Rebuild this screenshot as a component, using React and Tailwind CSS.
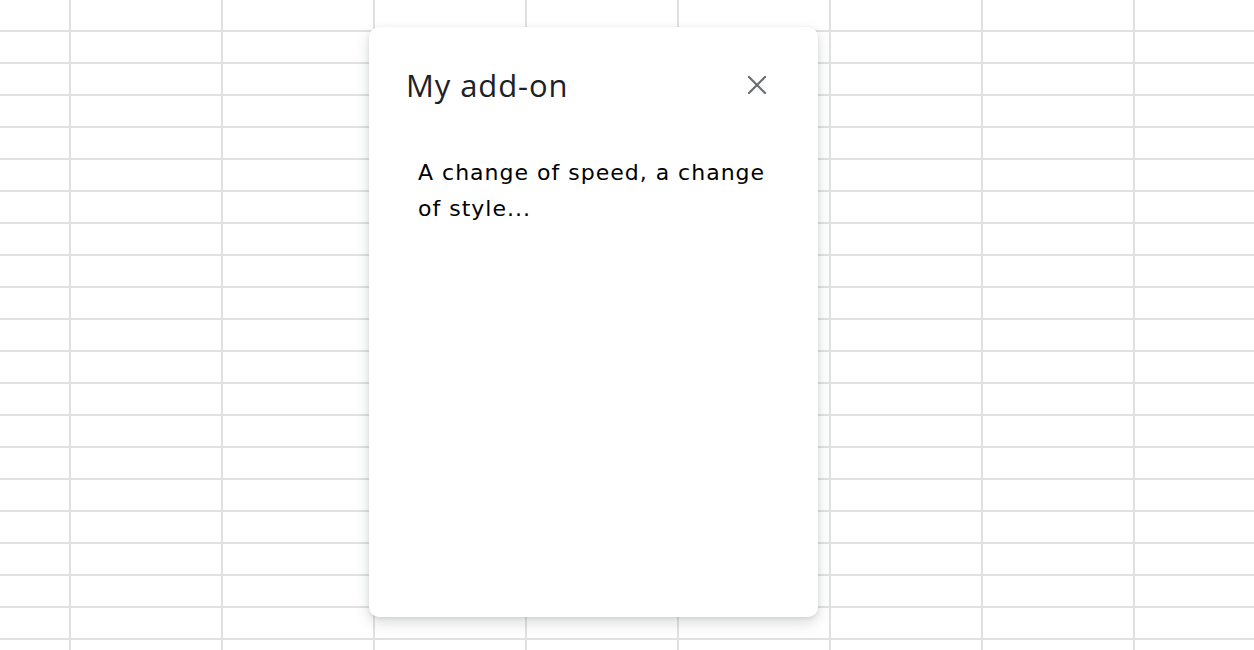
import { X } from 'lucide-react';

// background sheet grid
const ROWS = 21;
const COLS = 9;

function SheetGrid() {
  return (
    <div className="grid grid-cols-[69px_repeat(8,150px)] auto-rows-[30px] gap-[2px] bg-[#e1e1e1] w-max">
      {Array.from({ length: ROWS * COLS }).map((_, i) => (
        <div key={i} className="bg-white" />
      ))}
    </div>
  );
}

export default function App() {
  return (
    <div className="relative w-full h-[650px] overflow-hidden bg-white">
      <SheetGrid />

      {/* Dialog */}
      <div className="absolute left-[369px] top-[27px] w-[449px] h-[590px] bg-white rounded-[10px] shadow-[0_6px_14px_rgba(60,64,67,0.18),0_1px_4px_rgba(60,64,67,0.12)] flex flex-col">
        <div className="flex items-center justify-between pl-[37px] pr-[45px] pt-[38px]">
          <h1 className="text-[31px] leading-[40px] tracking-[0.9px] text-[#202124] font-['Open_Sans',sans-serif]">
            My add-on
          </h1>
          <button className="text-[#6b6e72] -mt-[1px]">
            <X size={32} strokeWidth={1.7} />
          </button>
        </div>
        <div className="pl-[49px] pr-[36px] pt-[50px] text-[22px] leading-[36px] tracking-[1px] text-black font-['DejaVu_Sans',sans-serif]">
          A change of speed, a change of style...
        </div>
      </div>
    </div>
  );
}
